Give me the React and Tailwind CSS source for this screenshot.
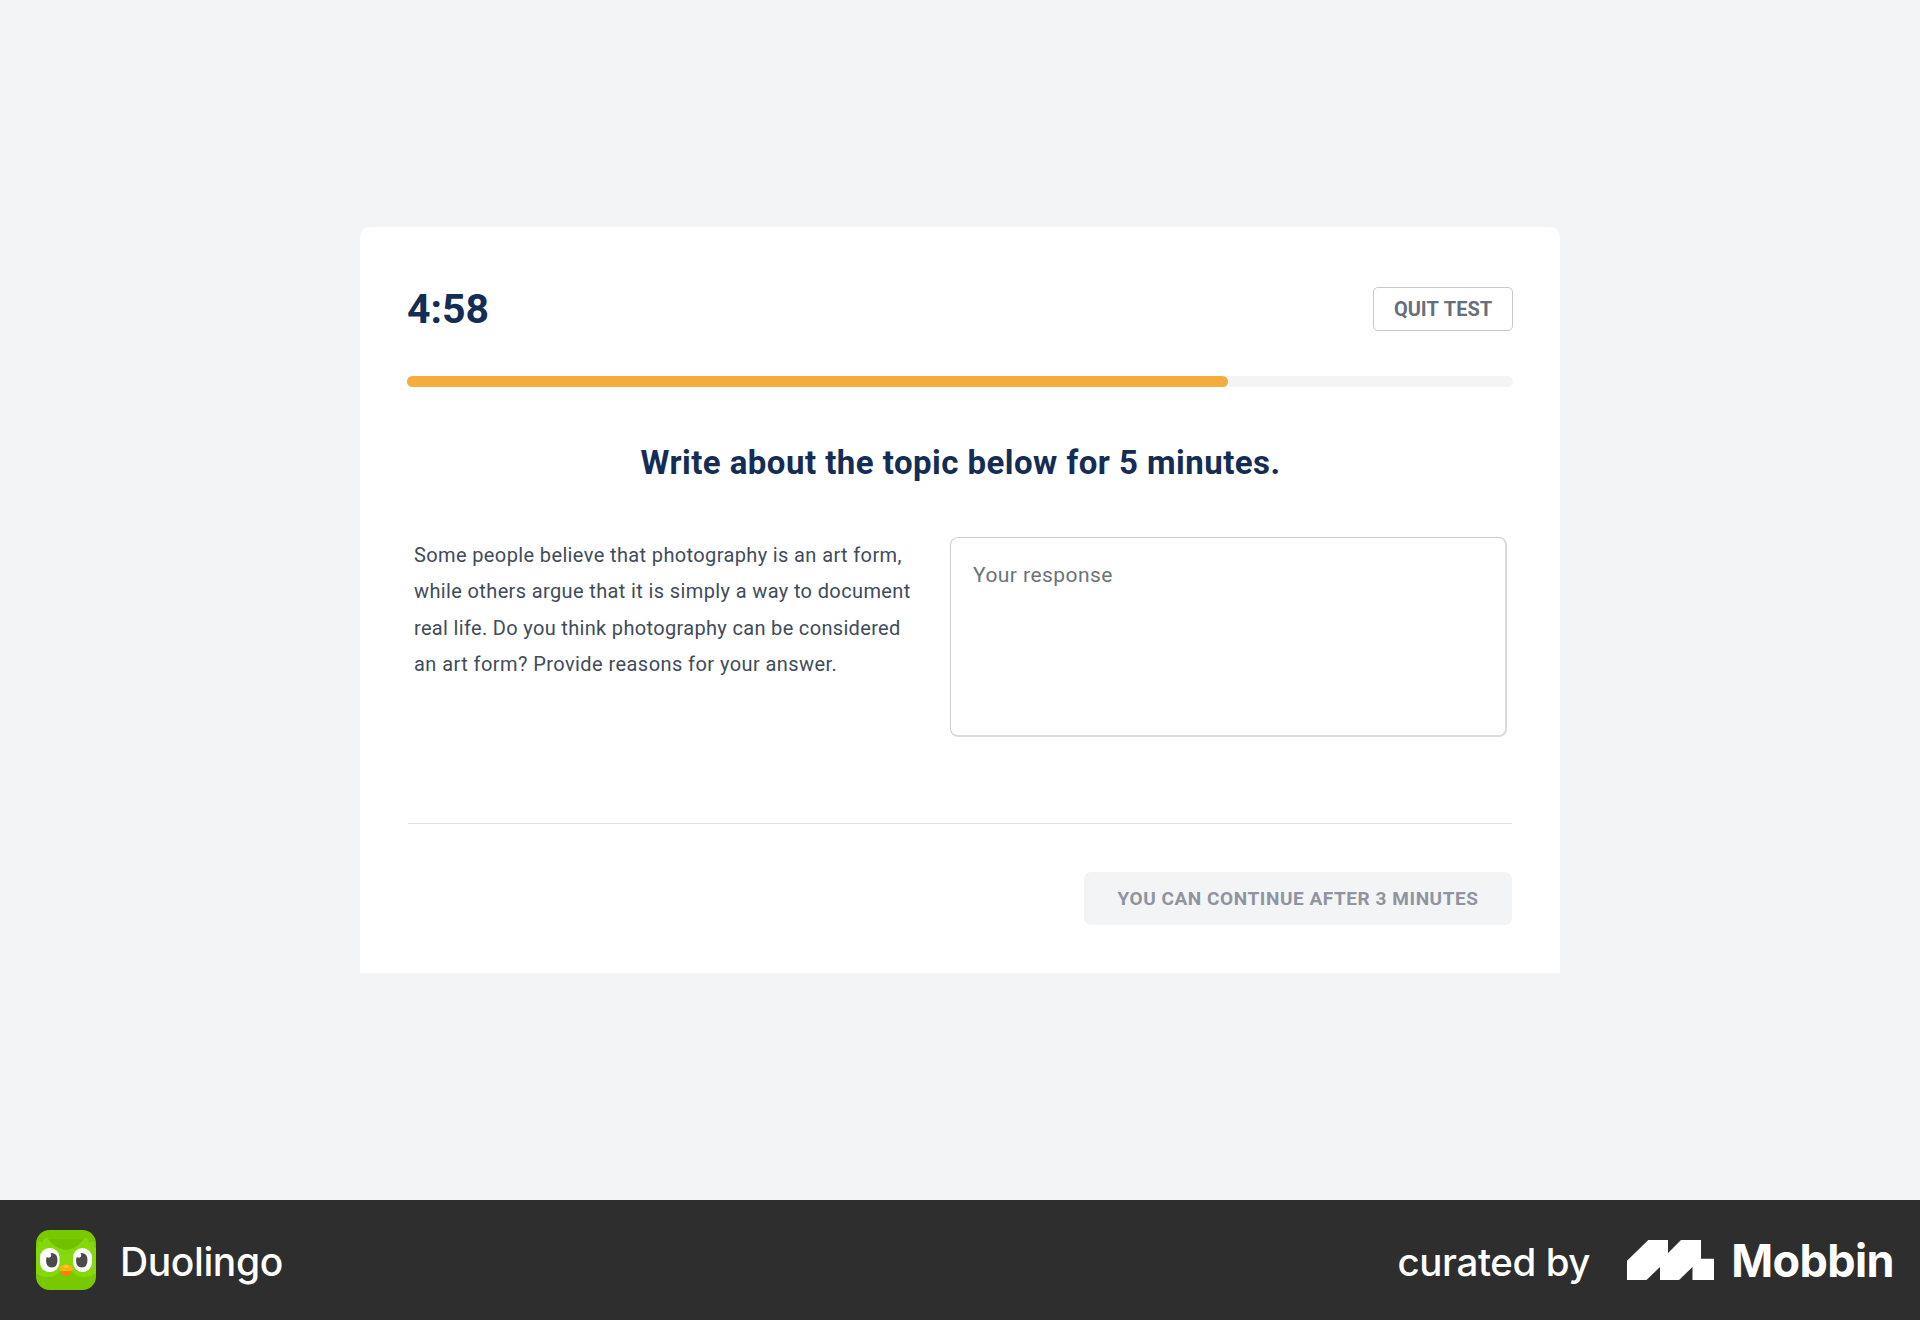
import React from 'react';

function OwlIcon() {
  return (
    <svg className="size-[60px] shrink-0" viewBox="0 0 60 60" aria-hidden="true">
      <defs>
        <clipPath id="owl-tile">
          <rect width="60" height="60" rx="13.5" />
        </clipPath>
      </defs>
      <g clipPath="url(#owl-tile)">
        <rect width="60" height="60" fill="#78c900" />
        <path d="M12 9 Q20 20 30 20 Q40 20 48 9Z" fill="#72c100" />
        <path
          d="M0 18 L2 17 Q1 13 3 11 L7 13 Q7 9 10.5 7 Q18 18 27 19.5 Q30 20 33 19.5 Q42 18 49.500 7 Q53 9 53 13 L57 11 Q59 13 58 17 L60 18 V43 Q54 47.500 47 47 Q39 46 35 40 H25 Q21 46 13 47 Q6 47.500 0 43Z"
          fill="#85d90a"
        />
        <rect x="4" y="18" width="19.500" height="24" rx="9.500" fill="#fff" />
        <rect x="37" y="18" width="19" height="24" rx="9.500" fill="#fff" />
        <path d="M16 23 Q21.500 23.500 21.500 30 Q21.500 37.500 15.800 37.500 Q10.300 37.500 10 30.500 Q10 28 11 27 Q13.500 28.500 15 26.500 Q15.700 25 14.500 23.300Z" fill="#4b4b4b" />
        <path d="M46 23 Q51.500 23.500 51.500 30 Q51.500 37.500 45.800 37.500 Q40.300 37.500 40 30.500 Q40 28 41 27 Q43.500 28.500 45 26.500 Q45.700 25 44.500 23.300Z" fill="#4b4b4b" />
        <path d="M25 39 H35 Q35.500 46 30 46 Q24.500 46 25 39Z" fill="#ff7f0a" />
        <path d="M23.300 38 Q26 34.300 30 34.300 Q34 34.300 36.700 38 Q37 41 34 41 H26 Q23 41 23.300 38Z" fill="#ffb108" />
        <ellipse cx="30" cy="36.700" rx="2.800" ry="1.300" fill="#ffd24a" />
      </g>
    </svg>
  );
}

function MobbinMark() {
  return (
    <svg className="h-10 w-[87px] shrink-0" viewBox="0 0 87 40" aria-hidden="true">
      <path d="M0 20.700 21.300 0H41V13L54 0H74V18.700H87V40H65.500V27L52 40H33V27L19.500 40H0Z" fill="#fff" />
    </svg>
  );
}

export default function App() {
  return (
    <div className="flex h-[1320px] w-[1920px] flex-col bg-[#f2f4f6] font-['Roboto',sans-serif]">
      <main className="flex h-[1200px] items-start justify-center pt-[227px]">
        <section className="flex h-[746px] w-[1200px] flex-col rounded-t-[10px] bg-white px-[47px] pt-[60px]">
          <header className="flex h-11 items-center justify-between">
            <div className="text-[41px] leading-[44px] font-bold text-[#142d54]">4:58</div>
            <button className="h-11 w-[140px] rounded-[5px] border border-[#c6c9cd] text-[20px] leading-[42px] font-bold text-[#686f7b] [word-spacing:1px]">
              QUIT TEST
            </button>
          </header>

          <div className="mt-[45px] h-[11px] rounded-full bg-[#f2f4f5]">
            <div className="h-full w-[821px] rounded-full bg-[#f3ad3d]" />
          </div>

          <h1 className="mt-14 h-10 pl-px text-center text-[33px] leading-[40px] font-bold tracking-[0.46px] whitespace-nowrap text-[#142d54]">
            Write about the topic below for 5 minutes.
          </h1>

          <div className="mt-[54px] flex justify-between pr-1.5 pl-[7px]">
            <p className="text-[20px] leading-[36.3px] whitespace-nowrap text-[#414b59]">
              <span className="block tracking-[0.375px]">Some people believe that photography is an art form,</span>
              <span className="block tracking-[0.37px]">while others argue that it is simply a way to document</span>
              <span className="block tracking-[0.33px]">real life. Do you think photography can be considered</span>
              <span className="block tracking-[0.43px]">an art form? Provide reasons for your answer.</span>
            </p>
            <textarea
              className="h-[200px] w-[557px] resize-none rounded-[8px] border border-r-2 border-b-2 border-[#cccfd1] border-r-[#d9dbdc] border-b-[#d9dbdc] px-[22px] pt-[22px] text-[21px] leading-[30px] tracking-[0.45px] text-[#414b59] placeholder:text-[#6c7278] placeholder:opacity-100"
              placeholder="Your response"
            />
          </div>

          <hr className="mx-px mt-[86px] border-t border-[#e0e2e4]" />

          <div className="mt-12 flex justify-end pr-px">
            <button className="h-[53px] w-[428px] rounded-[7px] bg-[#f2f4f6] text-[19px] leading-[53px] font-bold tracking-[0.56px] whitespace-nowrap text-[#8f949f]">
              YOU CAN CONTINUE AFTER 3 MINUTES
            </button>
          </div>
        </section>
      </main>

      <footer className="flex h-[120px] items-center justify-between bg-[#2e2e2e] pr-[26px] pl-9 font-['Inter',sans-serif] text-white">
        <div className="flex items-center gap-6">
          <OwlIcon />
          <span className="pt-1 text-[39px] leading-[40px] font-medium tracking-[-0.4px]">Duolingo</span>
        </div>
        <div className="flex items-center">
          <span className="pt-1 text-[38.5px] leading-[40px] font-medium tracking-[-0.4px]">curated by</span>
          <div className="ml-[37px] flex items-center gap-[17px]">
            <MobbinMark />
            <span className="pt-px text-[45px] leading-[48px] font-bold tracking-[-0.6px]">Mobbin</span>
          </div>
        </div>
      </footer>
    </div>
  );
}
